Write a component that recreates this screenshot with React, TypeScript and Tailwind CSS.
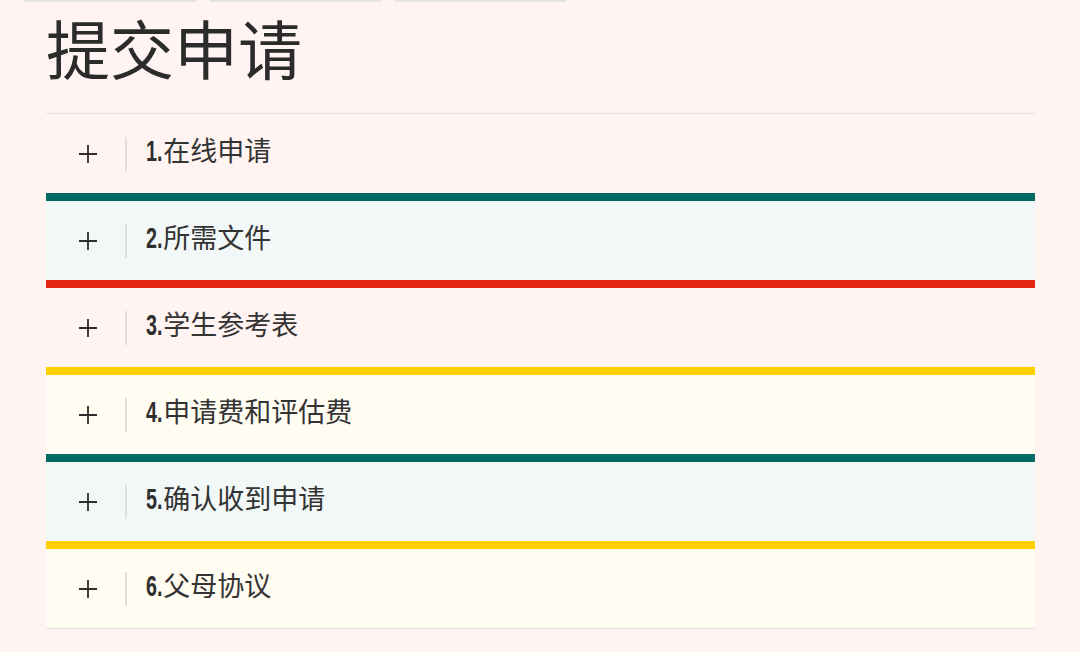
const items = [
  { num: "1", label: "在线申请", border: "border-t border-t-[#e6e2e1]", bg: "bg-[#fff4f2]" },
  { num: "2", label: "所需文件", border: "border-t-8 border-t-[#006b65]", bg: "bg-[#f2f8f7]" },
  { num: "3", label: "学生参考表", border: "border-t-8 border-t-[#e32513]", bg: "bg-[#fff4f2]" },
  { num: "4", label: "申请费和评估费", border: "border-t-8 border-t-[#ffd000]", bg: "bg-[#fffcf1]" },
  { num: "5", label: "确认收到申请", border: "border-t-8 border-t-[#006b65]", bg: "bg-[#f2f8f7]" },
  { num: "6", label: "父母协议", border: "border-t-8 border-t-[#ffd000]", bg: "bg-[#fffcf1]" },
];

function Plus() {
  return (
    <svg width="20" height="20" viewBox="0 0 20 20" className="text-[#2d2d2d]">
      <path d="M10 1v18M1 10h18" stroke="currentColor" strokeWidth="1.8" fill="none" />
    </svg>
  );
}

export default function App() {
  return (
    <div className="min-h-[652px] w-[1080px] bg-[#fff4f2] font-['Noto_Sans_CJK_SC','Noto_Sans',sans-serif] text-[#333]">
      <div className="flex gap-[14px] pl-[24px]">
        <div className="h-[2px] w-[172px] bg-[#e3e3e3]" />
        <div className="h-[2px] w-[171px] bg-[#e3e3e3]" />
        <div className="h-[2px] w-[171px] bg-[#e3e3e3]" />
      </div>

      <div className="ml-[46px] w-[989px]">
        <h1 className="pt-[5px] pb-[27px] text-[64px] leading-[79px] font-normal text-[#2b2b2b]">
          提交申请
        </h1>

        <div className="border-b border-b-[#e6e2e1]">
          {items.map((it) => (
            <div key={it.num} className={`${it.border} ${it.bg}`}>
              <div className="flex h-[79px] items-center">
                <div className="ml-[32px] flex">
                  <Plus />
                </div>
                <div className="ml-[27px] h-[34px] w-[2px] bg-[#e2dedd]" />
                <div className="ml-[19px] mb-[4px] flex items-baseline text-[27px]">
                  <span className="mr-[-7px] inline-block origin-left scale-x-[0.68] font-['Liberation_Sans',sans-serif] text-[29px] font-bold text-[#2e2e2e]">
                    {it.num}.
                  </span>
                  <span className="text-[#333]">{it.label}</span>
                </div>
              </div>
            </div>
          ))}
        </div>
      </div>
    </div>
  );
}
